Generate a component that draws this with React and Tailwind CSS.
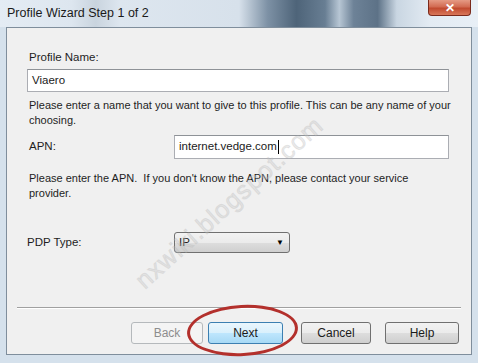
const font = { fontFamily: '"Liberation Sans", Arial, sans-serif' }

const WinButton = ({ children, disabled, primary, className = '' }) => (
  <div
    className={`h-[22px] flex items-center justify-center rounded-[3px] border text-[12px] ${
      disabled
        ? 'border-[#b5b9bc] bg-[#f4f4f4] text-[#8d8d8d]'
        : primary
        ? 'border-[#3c7fb1] bg-[linear-gradient(#eaf6fd_0%,#d9f0fc_50%,#bee6fd_51%,#a7d9f5_100%)] text-[#1b1b1b]'
        : 'border-[#707070] bg-[linear-gradient(#f2f2f2_0%,#ebebeb_50%,#dddddd_51%,#cfcfcf_100%)] text-[#1b1b1b]'
    } ${className}`}
  >
    {children}
  </div>
)

const TextBox = ({ children, className = '' }) => (
  <div
    className={`h-[23px] flex items-center bg-white border border-[#abadb3] border-t-[#8e9297] px-[4px] text-[11.5px] text-[#1b1b1b] ${className}`}
  >
    {children}
  </div>
)

export default function App() {
  return (
    <div
      className="relative w-[478px] h-[363px] overflow-hidden flex flex-col bg-[#d5e1ec]"
      style={font}
    >
      {/* Title bar */}
      <div className="relative h-[27px] flex items-start bg-[linear-gradient(90deg,#e4ecf4_0%,#dde6ef_15%,#c9d4de_20%,#dde6ef_25%,#d7e1eb_50%,#7d91a5_56%,#4e6479_62%,#687e93_68%,#b7c6d4_71%,#6d8297_74%,#5d7287_79%,#c9d6e2_83%,#e3ebf3_90%,#e8eff6_100%)]">
        <span className="ml-[7px] mt-[4px] text-[12.5px] text-[#1a1a1a]">Profile Wizard Step 1 of 2</span>
        <div className="ml-auto mr-[7px] w-[43px] h-[16px] rounded-b-[4px] border border-[#7a2a1c] border-t-0 bg-[linear-gradient(#e59a84_0%,#d26b52_45%,#c14a2f_55%,#d8775a_100%)] flex items-center justify-center">
          <span className="text-white text-[12px] font-bold leading-none">✕</span>
        </div>
      </div>

      {/* Frame + client */}
      <div className="flex flex-1 px-[6px] pb-[8px]">
        <div className="relative flex-1 flex flex-col bg-[#f0f0f0] border border-[#7f8e9c] text-[#1e1e1e] text-[11px]">
          <div className="ml-[22px] mt-[22px] leading-[15px] text-[11.5px]">Profile Name:</div>
          <TextBox className="ml-[20px] mr-[22px] mt-[4px]">Viaero</TextBox>
          <div className="ml-[22px] mr-[14px] mt-[6px] leading-[15px]">
            Please enter a name that you want to give to this profile. This can be any name of your choosing.
          </div>
          <div className="flex items-center mt-[7px]">
            <div className="ml-[22px] w-[145px] text-[11.5px]">APN:</div>
            <TextBox className="flex-1 mr-[22px] h-[24px]">
              internet.vedge.com<span className="ml-[1px] inline-block w-[1px] h-[14px] bg-black" />
            </TextBox>
          </div>
          <div className="ml-[22px] mr-[40px] mt-[12px] leading-[15px]">
            Please enter the APN.&nbsp; If you don't know the APN, please contact your service provider.
          </div>
          <div className="flex items-center mt-[31px]">
            <div className="ml-[20px] w-[147px] text-[11.5px]">PDP Type:</div>
            <div className="w-[116px] h-[21px] flex items-center rounded-[3px] border border-[#707070] bg-[linear-gradient(#f2f2f2_0%,#ebebeb_50%,#dddddd_51%,#cfcfcf_100%)] pl-[4px] pr-[5px] text-[11.5px]">
              <span className="flex-1">IP</span>
              <span className="text-[8px] text-black leading-none">▼</span>
            </div>
          </div>

          <div className="flex-1" />
          <div className="mx-[10px] h-[2px] border-t border-[#a0a0a0] border-b border-b-white" />
          <div className="flex items-center mt-[13px] mb-[10px] mr-[12px] justify-end">
            <WinButton disabled className="w-[72px]">Back</WinButton>
            <WinButton primary className="w-[75px] ml-[5px]">Next</WinButton>
            <WinButton className="w-[70px] ml-[18px]">Cancel</WinButton>
            <WinButton className="w-[74px] ml-[14px]">Help</WinButton>
          </div>
        </div>
      </div>

      {/* Watermark */}
      <div className="pointer-events-none absolute left-[108px] top-[184px] origin-center -rotate-[42deg] text-[25px] tracking-[1px] text-[rgba(200,200,200,0.35)] [-webkit-text-stroke:1px_rgba(170,170,170,0.22)]">
        nxwiki.blogspot.com
      </div>

      {/* Red annotation ellipse */}
      <div className="pointer-events-none absolute left-[187px] top-[305px] w-[111px] h-[51px] rounded-[50%] border-[3px] border-[#b3302c] -rotate-[3deg]" />
    </div>
  )
}
